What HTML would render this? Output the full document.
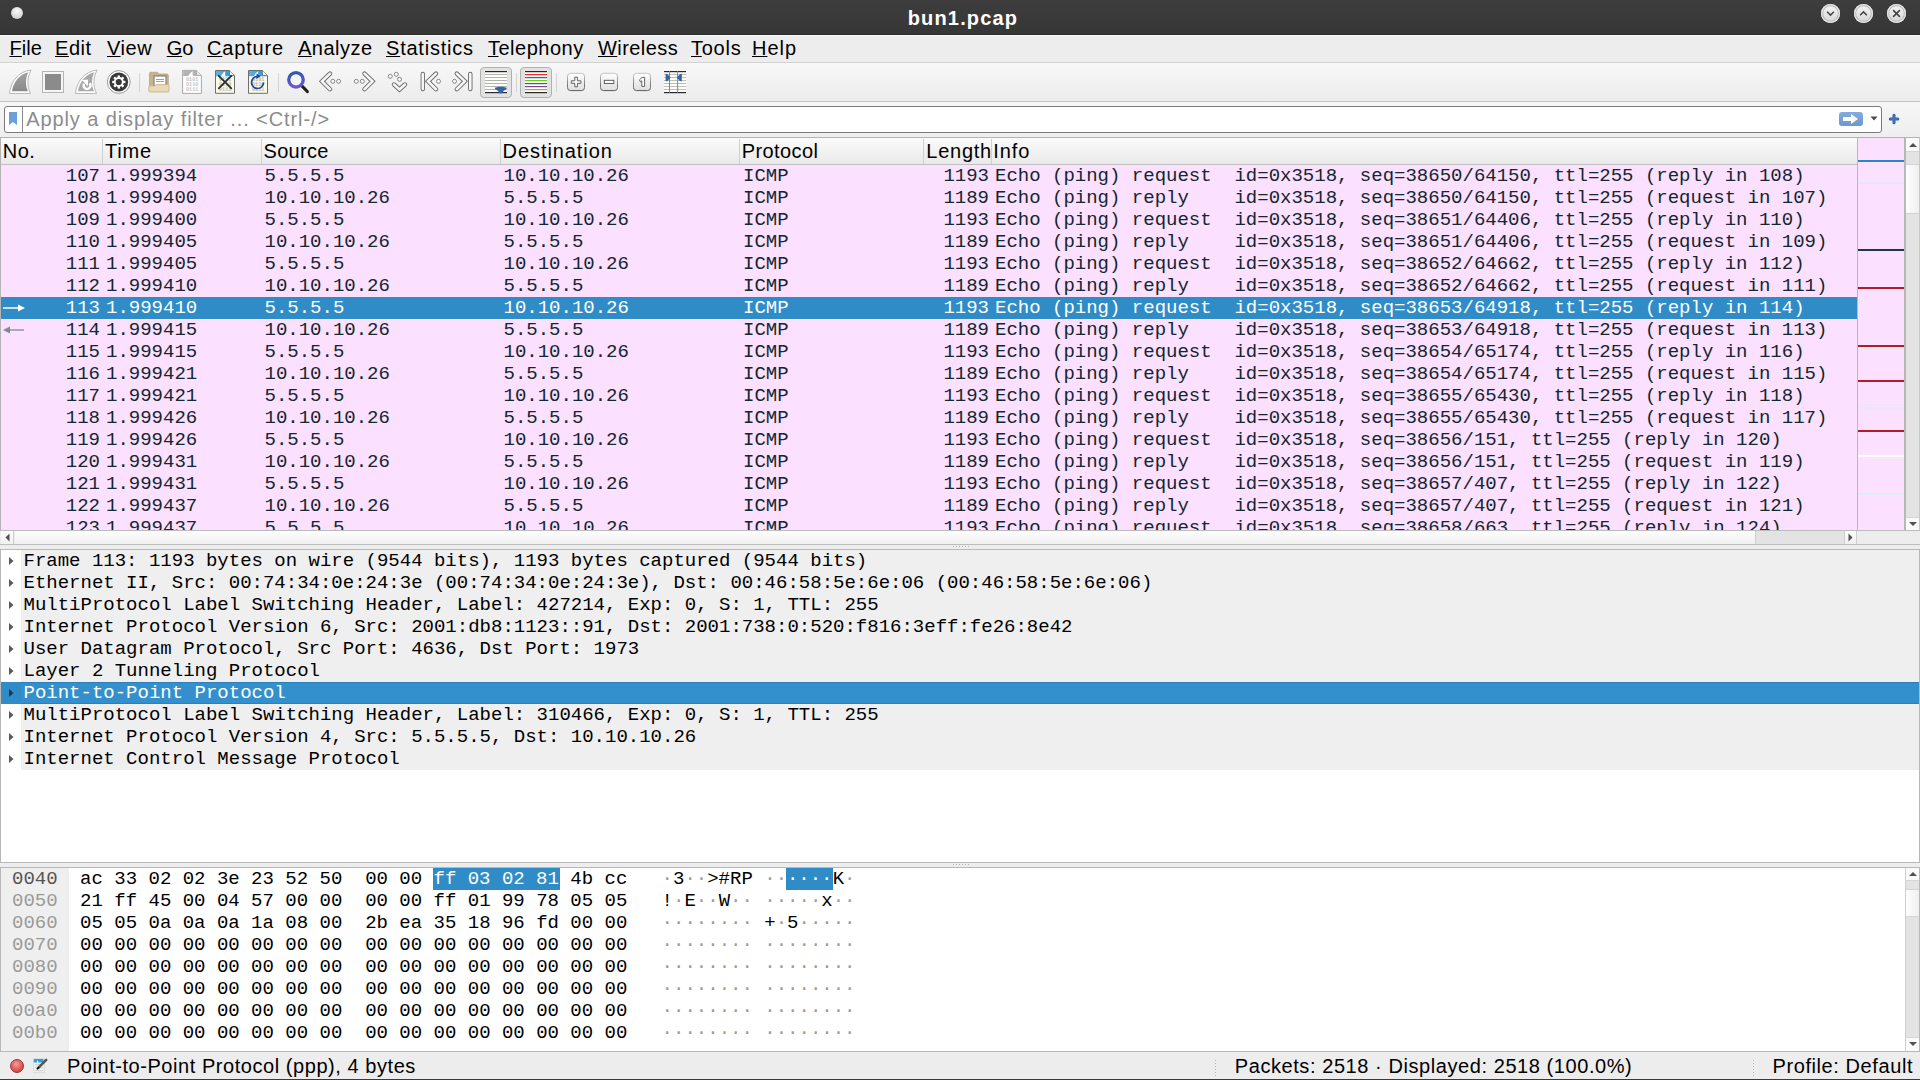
<!DOCTYPE html><html><head><meta charset="utf-8"><title>bun1.pcap</title><style>

*{box-sizing:border-box;margin:0;padding:0}
html,body{width:1920px;height:1080px;overflow:hidden;background:#ededed}
body{position:relative;font-family:"Liberation Sans",sans-serif;font-size:20px;color:#000}
.a{position:absolute}
.t{position:absolute;white-space:pre;line-height:22px}
.m{font-family:"Liberation Mono",monospace;font-size:19px}

</style></head><body>
<div class="a" style="left:0;top:0;width:1920px;height:35px;background:linear-gradient(#3d3d3d,#363636);border-bottom:1px solid #2b2b2b"></div>
<div class="a" style="left:0;top:35px;width:1920px;height:1px;background:#fafafa"></div>
<div class="a" style="left:11px;top:7px;width:12px;height:12px;border-radius:50%;background:radial-gradient(circle at 50% 35%,#fafafa,#d4d4d4 70%,#bdbdbd);box-shadow:0 0 1px #222"></div>
<div class="t" style="left:907.75px;top:7px;font-weight:bold;color:#ffffff;letter-spacing:1.156px">bun1.pcap</div>
<div class="a" style="left:1821.0px;top:4px;width:19px;height:19px;border-radius:50%;background:linear-gradient(#f6f6f6,#d6d6d6);box-shadow:inset 0 0 0 1.2px #e2e2e2,inset 0 0 0 2.2px #b8b8b8"></div>
<svg class="a" style="left:1821.0px;top:4px" width="19" height="19" viewBox="-9.5 -9.5 19 19"><path d="M-3.4,-1.7 L0,1.6 L3.4,-1.7" stroke="#444" stroke-width="1.5" fill="none"/></svg>
<div class="a" style="left:1854.0px;top:4px;width:19px;height:19px;border-radius:50%;background:linear-gradient(#f6f6f6,#d6d6d6);box-shadow:inset 0 0 0 1.2px #e2e2e2,inset 0 0 0 2.2px #b8b8b8"></div>
<svg class="a" style="left:1854.0px;top:4px" width="19" height="19" viewBox="-9.5 -9.5 19 19"><path d="M-3.4,1.7 L0,-1.6 L3.4,1.7" stroke="#444" stroke-width="1.5" fill="none"/></svg>
<div class="a" style="left:1887.0px;top:4px;width:19px;height:19px;border-radius:50%;background:linear-gradient(#f6f6f6,#d6d6d6);box-shadow:inset 0 0 0 1.2px #e2e2e2,inset 0 0 0 2.2px #b8b8b8"></div>
<svg class="a" style="left:1887.0px;top:4px" width="19" height="19" viewBox="-9.5 -9.5 19 19"><path d="M-3.4,-3.4 L3.4,3.4 M3.4,-3.4 L-3.4,3.4" stroke="#444" stroke-width="1.5" fill="none"/></svg>
<div class="a" style="left:0;top:36px;width:1920px;height:27px;background:#ededed;border-bottom:1px solid #d2d2d2"></div>
<div class="t" style="left:9.50px;top:37px;letter-spacing:0.067px"><span style="text-decoration:underline;text-decoration-thickness:1px;text-underline-offset:1px">F</span>ile</div>
<div class="t" style="left:55.00px;top:37px;letter-spacing:0.567px"><span style="text-decoration:underline;text-decoration-thickness:1px;text-underline-offset:1px">E</span>dit</div>
<div class="t" style="left:107.00px;top:37px;letter-spacing:0.567px"><span style="text-decoration:underline;text-decoration-thickness:1px;text-underline-offset:1px">V</span>iew</div>
<div class="t" style="left:166.70px;top:37px;letter-spacing:0.000px"><span style="text-decoration:underline;text-decoration-thickness:1px;text-underline-offset:1px">G</span>o</div>
<div class="t" style="left:207.00px;top:37px;letter-spacing:0.833px"><span style="text-decoration:underline;text-decoration-thickness:1px;text-underline-offset:1px">C</span>apture</div>
<div class="t" style="left:298.00px;top:37px;letter-spacing:0.500px"><span style="text-decoration:underline;text-decoration-thickness:1px;text-underline-offset:1px">A</span>nalyze</div>
<div class="t" style="left:386.00px;top:37px;letter-spacing:0.778px"><span style="text-decoration:underline;text-decoration-thickness:1px;text-underline-offset:1px">S</span>tatistics</div>
<div class="t" style="left:488.00px;top:37px;letter-spacing:0.500px"><span style="text-decoration:underline;text-decoration-thickness:1px;text-underline-offset:1px">T</span>elephony</div>
<div class="t" style="left:598.00px;top:37px;letter-spacing:0.429px"><span style="text-decoration:underline;text-decoration-thickness:1px;text-underline-offset:1px">W</span>ireless</div>
<div class="t" style="left:691.00px;top:37px;letter-spacing:0.750px"><span style="text-decoration:underline;text-decoration-thickness:1px;text-underline-offset:1px">T</span>ools</div>
<div class="t" style="left:752.00px;top:37px;letter-spacing:1.000px"><span style="text-decoration:underline;text-decoration-thickness:1px;text-underline-offset:1px">H</span>elp</div>
<div class="a" style="left:0;top:63px;width:1920px;height:39px;background:linear-gradient(#f8f8f8,#ececec);border-bottom:1px solid #c4c4c4"></div>
<svg class="a" style="left:0;top:62px" width="700" height="40" viewBox="0 62 700 40">
<defs>
<linearGradient id="gfin" x1="0" y1="0" x2="0" y2="1"><stop offset="0" stop-color="#a2a2a2"/><stop offset="1" stop-color="#8a8a8a"/></linearGradient>
<linearGradient id="gbtn" x1="0" y1="0" x2="0" y2="1"><stop offset="0" stop-color="#ffffff"/><stop offset="1" stop-color="#dedede"/></linearGradient>
<linearGradient id="gbord" x1="0" y1="0" x2="0" y2="1"><stop offset="0" stop-color="#c4c4c4"/><stop offset="1" stop-color="#5a5a5a"/></linearGradient>
<linearGradient id="gband" x1="0" y1="0" x2="1" y2="0"><stop offset="0" stop-color="#5ab4e8"/><stop offset="1" stop-color="#1898e0"/></linearGradient>
<linearGradient id="gring" x1="0" y1="0" x2="0" y2="1"><stop offset="0" stop-color="#2a5ab8"/><stop offset="1" stop-color="#6a58d0"/></linearGradient>
</defs>
<!-- 1 start capture fin -->
<path d="M9.5,93.5 C10.5,82 18,71.5 31,70 C27,78 27,86 30.5,93.5 Z" fill="#fff" stroke="#b8b8b8" stroke-width="1"/>
<path d="M12,91.3 C13.5,82 19.5,74.5 28.3,72.3 C25.3,79 25.3,85.5 28,91.3 Z" fill="url(#gfin)"/>
<!-- 2 stop -->
<rect x="42.5" y="71.5" width="21" height="21" fill="#f6f6f6" stroke="#b4b4b4" stroke-width="1"/>
<rect x="45" y="74" width="16" height="16" fill="#8b8b8b"/>
<!-- 3 restart fin -->
<path d="M75.5,93.5 C76.5,82 84,71.5 97,70 C93,78 93,86 96.5,93.5 Z" fill="#fff" stroke="#b8b8b8" stroke-width="1"/>
<path d="M78,91.3 C79.5,82 85.5,74.5 94.3,72.3 C91.3,79 91.3,85.5 94,91.3 Z" fill="#a9a9a9"/>
<path d="M84.1,83.8 A3.4,3.4 0 1 0 89.6,83.2" fill="none" stroke="#fff" stroke-width="2.3"/>
<path d="M82,79.9 L88.2,79.6 L87.7,86.2 Z" fill="#fff"/>
<!-- 4 options gear -->
<circle cx="118.8" cy="82" r="11.4" fill="#fff" stroke="#9a9a9a" stroke-width="1"/>
<circle cx="118.8" cy="82" r="9.4" fill="#3a3a3a"/>
<g transform="translate(118.8 82)">
<circle r="4.9" fill="#fff"/>
<g fill="#fff">
<rect x="-1.15" y="-6.6" width="2.3" height="2.6"/><rect x="-1.15" y="4" width="2.3" height="2.6"/>
<rect x="-6.6" y="-1.15" width="2.6" height="2.3"/><rect x="4" y="-1.15" width="2.6" height="2.3"/>
<rect x="-1.15" y="-6.6" width="2.3" height="2.6" transform="rotate(45)"/><rect x="-1.15" y="4" width="2.3" height="2.6" transform="rotate(45)"/>
<rect x="-6.6" y="-1.15" width="2.6" height="2.3" transform="rotate(45)"/><rect x="4" y="-1.15" width="2.6" height="2.3" transform="rotate(45)"/>
</g>
<circle r="3.1" fill="#383838"/>
</g>
<rect x="139" y="73" width="1" height="19" fill="#d4d4d4"/>
<!-- 5 open folder -->
<path d="M149.5,91 V73.5 Q149.5,72.3 150.7,72.3 H157.5 L158.8,74 H167 Q168.3,74 168.3,75.3 V86 Z" fill="#c9b38c" stroke="#b8a27c" stroke-width="0.8"/>
<rect x="154" y="76" width="12" height="9.5" fill="#fff" stroke="#6e746e" stroke-width="1"/>
<rect x="156" y="79" width="8" height="1" fill="#9aa09a"/><rect x="156" y="81" width="8" height="1" fill="#9aa09a"/>
<path d="M148.8,91 V86.8 Q148.8,85.8 149.8,85.8 H154.5 L156,84.6 H168 Q169,84.6 169,85.6 V91 Q169,92 168,92 H149.8 Q148.8,92 148.8,91 Z" fill="#ead8b8" stroke="#c8ae84" stroke-width="0.8"/>
<!-- 6 file (disabled) -->
<path d="M182.6,70.4 H196.5 L201.4,75.5 V93.4 H182.6 Z" fill="#fff" stroke="#a8a8a8" stroke-width="1"/>
<path d="M183.2,71 H196 L200,75 V76 H183.2 Z" fill="#b4b4b4"/>
<path d="M188.5,76 C189.5,73.5 191,72 193,71.3 C192.3,73 192.5,74.5 193,76 Z" fill="#fff"/>
<path d="M196.5,70.6 V75.5 H201.2" fill="#e8e8e8" stroke="#a8a8a8" stroke-width="0.8"/>
<g font-family="Liberation Mono" font-size="5.2" fill="#c4c4c4" font-weight="bold"><text x="186" y="81">0101</text><text x="186" y="86">0110</text><text x="186" y="91">0111</text></g>
<!-- 7 close file -->
<path d="M215.5,70.5 H229.5 L234.5,75.5 V93.3 H215.5 Z" fill="#fbfae8" stroke="#6e6e6e" stroke-width="1"/>
<path d="M216,71 H229.3 L233.5,75 V76.3 H216 Z" fill="url(#gband)"/>
<path d="M221,76.3 C222,73.5 223.5,72 225.5,71.3 C224.8,73 225,74.6 225.5,76.3 Z" fill="#fff"/>
<path d="M229.5,70.6 V75.5 H234.3" fill="#f4f4f4" stroke="#6e6e6e" stroke-width="0.8"/>
<g font-family="Liberation Mono" font-size="5.2" fill="#b8b8b0" font-weight="bold"><text x="219" y="81">0101</text><text x="219" y="86">0110</text><text x="219" y="91">0111</text></g>
<path d="M218.8,75.8 L231.3,88.3 M231.3,75.8 L218.8,88.3" stroke="#2a2e30" stroke-width="1.8" stroke-linecap="round"/>
<!-- 8 reload file -->
<path d="M248.5,70.5 H262.5 L267.5,75.5 V93.3 H248.5 Z" fill="#fbfae8" stroke="#6e6e6e" stroke-width="1"/>
<path d="M249,71 H262.3 L266.5,75 V76.3 H249 Z" fill="url(#gband)"/>
<path d="M254,76.3 C255,73.5 256.5,72 258.5,71.3 C257.8,73 258,74.6 258.5,76.3 Z" fill="#fff"/>
<path d="M262.5,70.6 V75.5 H267.3" fill="#f4f4f4" stroke="#6e6e6e" stroke-width="0.8"/>
<g font-family="Liberation Mono" font-size="5.2" fill="#b8b8b0" font-weight="bold"><text x="252" y="81">0101</text><text x="252" y="86">0110</text><text x="252" y="91">0111</text></g>
<path d="M263.5,82.5 A6,6 0 1 1 257.5,76.5" fill="none" stroke="#18489a" stroke-width="1.7"/>
<path d="M256.5,73.5 L260.5,76.3 L256.5,79 Z" fill="#18489a"/>
<rect x="278" y="73" width="1" height="19" fill="#d4d4d4"/>
<!-- 9 find -->
<path d="M301.5,85.5 L307.3,91.5" stroke="#1e1e1e" stroke-width="3.2" stroke-linecap="round"/>
<circle cx="296" cy="79.8" r="7.4" fill="#f4f4f4" stroke="url(#gring)" stroke-width="3"/>
<circle cx="296" cy="79.8" r="5.9" fill="none" stroke="#1e2a60" stroke-width="0.6" opacity="0.6"/>
<!-- nav chevrons -->
<g fill="none" stroke-linecap="round" stroke-linejoin="miter">
<g stroke="#6a6a6a" stroke-width="4.4">
<path d="M330,73.6 L322,81.3 L330,89.2"/>
<path d="M364.5,73.6 L372.5,81.3 L364.5,89.2"/>
<path d="M394,84.5 L399.5,89.5 L405,84.5"/>
<path d="M436,73.6 L428,81.3 L436,89.2"/><path d="M422.8,74 V89"/>
<path d="M456.8,73.6 L464.8,81.3 L456.8,89.2"/><path d="M470.3,74 V89"/>
</g>
<g stroke="#f6f6f6" stroke-width="2.6">
<path d="M330,73.6 L322,81.3 L330,89.2"/>
<path d="M364.5,73.6 L372.5,81.3 L364.5,89.2"/>
<path d="M394,84.5 L399.5,89.5 L405,84.5"/>
<path d="M436,73.6 L428,81.3 L436,89.2"/><path d="M422.8,74 V89"/>
<path d="M456.8,73.6 L464.8,81.3 L456.8,89.2"/><path d="M470.3,74 V89"/>
</g>
</g>
<g fill="#fafafa" stroke="#7a7a7a" stroke-width="0.9">
<circle cx="332.8" cy="81.3" r="2"/><circle cx="338.6" cy="81.3" r="2"/>
<circle cx="356.3" cy="81.3" r="2"/><circle cx="362.3" cy="81.3" r="2"/>
<circle cx="390.3" cy="76.3" r="2"/><circle cx="396.3" cy="74.3" r="2"/><circle cx="399.5" cy="79.3" r="2"/>
<circle cx="438.5" cy="81.3" r="2"/>
<circle cx="454.5" cy="81.3" r="2"/>
</g>
<!-- pressed autoscroll -->
<rect x="480.5" y="67.5" width="31" height="30" rx="3.5" fill="#e2e2e2" stroke="#b0b0b0" stroke-width="1"/>
<rect x="485" y="71" width="22" height="22" fill="#fdfdfd"/>
<g fill="#a8aca0"><rect x="485" y="74" width="22" height="0.9"/><rect x="485" y="77" width="22" height="0.9"/><rect x="485" y="80" width="22" height="0.9"/><rect x="485" y="83" width="22" height="0.9"/><rect x="485" y="86" width="22" height="0.9"/><rect x="485" y="89" width="22" height="0.9"/></g>
<rect x="485" y="71" width="22" height="1.2" fill="#262a2c"/><rect x="485" y="92" width="22" height="1.2" fill="#262a2c"/>
<path d="M494.8,87.8 Q500.8,85.6 506.8,87.8 Q507,89 503.5,91 L501.8,93.5 H499.8 L498.1,91 Q494.6,89 494.8,87.8 Z" fill="#3264aa"/>
<rect x="516" y="73" width="1" height="19" fill="#d4d4d4"/>
<!-- pressed colorize -->
<rect x="520.5" y="67.5" width="31" height="30" rx="3.5" fill="#e2e2e2" stroke="#b0b0b0" stroke-width="1"/>
<rect x="525" y="71" width="22" height="22" fill="#fdfdfd"/>
<rect x="525" y="71" width="22" height="1.2" fill="#262a2c"/>
<rect x="525" y="74" width="22" height="1.2" fill="#ee2828"/>
<rect x="525" y="77" width="22" height="1.2" fill="#3264aa"/>
<rect x="525" y="80" width="22" height="1.2" fill="#66d414"/>
<rect x="525" y="83" width="22" height="1.2" fill="#3264aa"/>
<rect x="525" y="86" width="22" height="1.2" fill="#74468a"/>
<rect x="525" y="89" width="22" height="1.2" fill="#c8a008"/>
<rect x="525" y="92" width="22" height="1.2" fill="#262a2c"/>
<rect x="556" y="73" width="1" height="19" fill="#d4d4d4"/>
<!-- zoom buttons -->
<rect x="567.5" y="73.3" width="17" height="17.3" rx="3" fill="url(#gbtn)" stroke="url(#gbord)" stroke-width="1"/>
<path d="M574.8,77.2 H577.4 V80.8 H580.9 V83.3 H577.4 V86.8 H574.8 V83.3 H571.3 V80.8 H574.8 Z" fill="#fff" stroke="#505450" stroke-width="0.9"/>
<rect x="600.5" y="73.3" width="17" height="17.3" rx="3" fill="url(#gbtn)" stroke="url(#gbord)" stroke-width="1"/>
<rect x="604.3" y="80.3" width="9.5" height="3.2" fill="#fff" stroke="#505450" stroke-width="0.9"/>
<rect x="633.5" y="73.3" width="17" height="17.3" rx="3" fill="url(#gbtn)" stroke="url(#gbord)" stroke-width="1"/>
<path d="M639.5,79.8 L642,77.4 H644.6 V86.4 H641.8 V80.8 L640.5,82 Z" fill="#fff" stroke="#505450" stroke-width="0.9"/>
<!-- resize columns -->
<rect x="664" y="71" width="22" height="22" fill="#fdfdfd"/>
<g fill="#b4b8ae"><rect x="664" y="74" width="22" height="0.9"/><rect x="664" y="77" width="22" height="0.9"/><rect x="664" y="80" width="22" height="0.9"/><rect x="664" y="83" width="22" height="0.9"/><rect x="664" y="86" width="22" height="0.9"/><rect x="664" y="89" width="22" height="0.9"/></g>
<rect x="664" y="71" width="22" height="1.2" fill="#262a2c"/><rect x="664" y="92" width="22" height="1.2" fill="#262a2c"/>
<rect x="669" y="71" width="0.9" height="22" fill="#7a7e78"/><rect x="677.2" y="71" width="0.9" height="22" fill="#7a7e78"/>
<path d="M665.6,73.8 Q666.5,73.6 667.5,74.2 L670.6,77.6 L667.5,81 Q666.5,81.5 665.6,81.3 Z" fill="#3264aa"/>
<path d="M681.8,73.8 Q680.9,73.6 679.9,74.2 L676.8,77.6 L679.9,81 Q680.9,81.5 681.8,81.3 Z" fill="#3264aa"/>
</svg>

<div class="a" style="left:0;top:102px;width:1920px;height:35px;background:linear-gradient(#f6f6f6,#eeeeee)"></div>
<div class="a" style="left:4px;top:106px;width:1878px;height:27px;background:#fff;border:1px solid #7a7a7a;border-radius:3px"></div>
<div class="a" style="left:22px;top:107px;width:1px;height:25px;background:#8a8a8a"></div>
<svg class="a" style="left:8px;top:111px" width="11" height="17" viewBox="0 0 11 17"><path d="M1,1 H9 V14 L5,11 L1,14 Z" fill="#6a9fd8"/></svg>
<div class="t" style="left:26.25px;top:108px;color:#8c8c8c;letter-spacing:0.897px">Apply a display filter ... &lt;Ctrl-/&gt;</div>
<div class="a" style="left:1839px;top:112px;width:24px;height:14px;border-radius:3px;background:linear-gradient(#86acdb,#6a98d0)"></div>
<svg class="a" style="left:1839px;top:112px" width="24" height="14" viewBox="0 0 24 14"><path d="M4,5 H12 V2 L19,7 L12,12 V9 H4 Z" fill="#fff"/></svg>
<svg class="a" style="left:1870px;top:116px" width="8" height="5" viewBox="0 0 8 5"><path d="M0.5,0.5 H7.5 L4,4.5 Z" fill="#4a4a4a"/></svg>
<svg class="a" style="left:1888px;top:113px" width="12" height="12" viewBox="0 0 12 12"><path d="M6,2.3 V9.8 M2.3,6 H9.8" stroke="#2f5ea6" stroke-width="3" stroke-linecap="round"/><path d="M6,2.6 V9.5 M2.6,6 H9.5" stroke="#4f80c8" stroke-width="1" stroke-linecap="round"/></svg>
<div class="a" style="left:0;top:137px;width:1920px;height:394px;background:#fce0ff;border-top:1px solid #b4b4b4;border-left:1px solid #b4b4b4;border-right:1px solid #c8c8c8"></div>
<div class="a" style="left:1px;top:138px;width:1856px;height:27px;background:linear-gradient(#fbfbfb,#e9e9e9);border-bottom:1px solid #c0c0c0"></div>
<div class="a" style="left:102px;top:139px;width:1px;height:25px;background:#d0d0d0"></div>
<div class="a" style="left:261px;top:139px;width:1px;height:25px;background:#d0d0d0"></div>
<div class="a" style="left:500px;top:139px;width:1px;height:25px;background:#d0d0d0"></div>
<div class="a" style="left:739px;top:139px;width:1px;height:25px;background:#d0d0d0"></div>
<div class="a" style="left:923px;top:139px;width:1px;height:25px;background:#d0d0d0"></div>
<div class="a" style="left:991px;top:139px;width:1px;height:25px;background:#d0d0d0"></div>
<div class="t" style="left:2.75px;top:140px;letter-spacing:0.500px">No.</div>
<div class="t" style="left:105.10px;top:140px;letter-spacing:0.767px">Time</div>
<div class="t" style="left:263.50px;top:140px;letter-spacing:0.300px">Source</div>
<div class="t" style="left:502.60px;top:140px;letter-spacing:0.920px">Destination</div>
<div class="t" style="left:741.80px;top:140px;letter-spacing:0.386px">Protocol</div>
<div class="t" style="left:926.30px;top:140px;letter-spacing:0.740px">Length</div>
<div class="t" style="left:993.30px;top:140px;letter-spacing:0.900px">Info</div>
<div class="a" style="left:1px;top:165px;width:1856px;height:22px;background:transparent;overflow:hidden;color:#12272e">
<div class="t m" style="left:64.8px;top:0">107</div>
<div class="t m" style="left:105px;top:0">1.999394</div>
<div class="t m" style="left:263.5px;top:0">5.5.5.5</div>
<div class="t m" style="left:502.5px;top:0">10.10.10.26</div>
<div class="t m" style="left:742px;top:0">ICMP</div>
<div class="t m" style="left:942.4px;top:0">1193</div>
<div class="t m" style="left:994px;top:0">Echo (ping) request  id=0x3518, seq=38650/64150, ttl=255 (reply in 108)</div>
</div>
<div class="a" style="left:1px;top:187px;width:1856px;height:22px;background:transparent;overflow:hidden;color:#12272e">
<div class="t m" style="left:64.8px;top:0">108</div>
<div class="t m" style="left:105px;top:0">1.999400</div>
<div class="t m" style="left:263.5px;top:0">10.10.10.26</div>
<div class="t m" style="left:502.5px;top:0">5.5.5.5</div>
<div class="t m" style="left:742px;top:0">ICMP</div>
<div class="t m" style="left:942.4px;top:0">1189</div>
<div class="t m" style="left:994px;top:0">Echo (ping) reply    id=0x3518, seq=38650/64150, ttl=255 (request in 107)</div>
</div>
<div class="a" style="left:1px;top:209px;width:1856px;height:22px;background:transparent;overflow:hidden;color:#12272e">
<div class="t m" style="left:64.8px;top:0">109</div>
<div class="t m" style="left:105px;top:0">1.999400</div>
<div class="t m" style="left:263.5px;top:0">5.5.5.5</div>
<div class="t m" style="left:502.5px;top:0">10.10.10.26</div>
<div class="t m" style="left:742px;top:0">ICMP</div>
<div class="t m" style="left:942.4px;top:0">1193</div>
<div class="t m" style="left:994px;top:0">Echo (ping) request  id=0x3518, seq=38651/64406, ttl=255 (reply in 110)</div>
</div>
<div class="a" style="left:1px;top:231px;width:1856px;height:22px;background:transparent;overflow:hidden;color:#12272e">
<div class="t m" style="left:64.8px;top:0">110</div>
<div class="t m" style="left:105px;top:0">1.999405</div>
<div class="t m" style="left:263.5px;top:0">10.10.10.26</div>
<div class="t m" style="left:502.5px;top:0">5.5.5.5</div>
<div class="t m" style="left:742px;top:0">ICMP</div>
<div class="t m" style="left:942.4px;top:0">1189</div>
<div class="t m" style="left:994px;top:0">Echo (ping) reply    id=0x3518, seq=38651/64406, ttl=255 (request in 109)</div>
</div>
<div class="a" style="left:1px;top:253px;width:1856px;height:22px;background:transparent;overflow:hidden;color:#12272e">
<div class="t m" style="left:64.8px;top:0">111</div>
<div class="t m" style="left:105px;top:0">1.999405</div>
<div class="t m" style="left:263.5px;top:0">5.5.5.5</div>
<div class="t m" style="left:502.5px;top:0">10.10.10.26</div>
<div class="t m" style="left:742px;top:0">ICMP</div>
<div class="t m" style="left:942.4px;top:0">1193</div>
<div class="t m" style="left:994px;top:0">Echo (ping) request  id=0x3518, seq=38652/64662, ttl=255 (reply in 112)</div>
</div>
<div class="a" style="left:1px;top:275px;width:1856px;height:22px;background:transparent;overflow:hidden;color:#12272e">
<div class="t m" style="left:64.8px;top:0">112</div>
<div class="t m" style="left:105px;top:0">1.999410</div>
<div class="t m" style="left:263.5px;top:0">10.10.10.26</div>
<div class="t m" style="left:502.5px;top:0">5.5.5.5</div>
<div class="t m" style="left:742px;top:0">ICMP</div>
<div class="t m" style="left:942.4px;top:0">1189</div>
<div class="t m" style="left:994px;top:0">Echo (ping) reply    id=0x3518, seq=38652/64662, ttl=255 (request in 111)</div>
</div>
<div class="a" style="left:1px;top:297px;width:1856px;height:22px;background:#308cc6;overflow:hidden;color:#ffffff">
<div class="t m" style="left:64.8px;top:0">113</div>
<div class="t m" style="left:105px;top:0">1.999410</div>
<div class="t m" style="left:263.5px;top:0">5.5.5.5</div>
<div class="t m" style="left:502.5px;top:0">10.10.10.26</div>
<div class="t m" style="left:742px;top:0">ICMP</div>
<div class="t m" style="left:942.4px;top:0">1193</div>
<div class="t m" style="left:994px;top:0">Echo (ping) request  id=0x3518, seq=38653/64918, ttl=255 (reply in 114)</div>
</div>
<div class="a" style="left:1px;top:319px;width:1856px;height:22px;background:transparent;overflow:hidden;color:#12272e">
<div class="t m" style="left:64.8px;top:0">114</div>
<div class="t m" style="left:105px;top:0">1.999415</div>
<div class="t m" style="left:263.5px;top:0">10.10.10.26</div>
<div class="t m" style="left:502.5px;top:0">5.5.5.5</div>
<div class="t m" style="left:742px;top:0">ICMP</div>
<div class="t m" style="left:942.4px;top:0">1189</div>
<div class="t m" style="left:994px;top:0">Echo (ping) reply    id=0x3518, seq=38653/64918, ttl=255 (request in 113)</div>
</div>
<div class="a" style="left:1px;top:341px;width:1856px;height:22px;background:transparent;overflow:hidden;color:#12272e">
<div class="t m" style="left:64.8px;top:0">115</div>
<div class="t m" style="left:105px;top:0">1.999415</div>
<div class="t m" style="left:263.5px;top:0">5.5.5.5</div>
<div class="t m" style="left:502.5px;top:0">10.10.10.26</div>
<div class="t m" style="left:742px;top:0">ICMP</div>
<div class="t m" style="left:942.4px;top:0">1193</div>
<div class="t m" style="left:994px;top:0">Echo (ping) request  id=0x3518, seq=38654/65174, ttl=255 (reply in 116)</div>
</div>
<div class="a" style="left:1px;top:363px;width:1856px;height:22px;background:transparent;overflow:hidden;color:#12272e">
<div class="t m" style="left:64.8px;top:0">116</div>
<div class="t m" style="left:105px;top:0">1.999421</div>
<div class="t m" style="left:263.5px;top:0">10.10.10.26</div>
<div class="t m" style="left:502.5px;top:0">5.5.5.5</div>
<div class="t m" style="left:742px;top:0">ICMP</div>
<div class="t m" style="left:942.4px;top:0">1189</div>
<div class="t m" style="left:994px;top:0">Echo (ping) reply    id=0x3518, seq=38654/65174, ttl=255 (request in 115)</div>
</div>
<div class="a" style="left:1px;top:385px;width:1856px;height:22px;background:transparent;overflow:hidden;color:#12272e">
<div class="t m" style="left:64.8px;top:0">117</div>
<div class="t m" style="left:105px;top:0">1.999421</div>
<div class="t m" style="left:263.5px;top:0">5.5.5.5</div>
<div class="t m" style="left:502.5px;top:0">10.10.10.26</div>
<div class="t m" style="left:742px;top:0">ICMP</div>
<div class="t m" style="left:942.4px;top:0">1193</div>
<div class="t m" style="left:994px;top:0">Echo (ping) request  id=0x3518, seq=38655/65430, ttl=255 (reply in 118)</div>
</div>
<div class="a" style="left:1px;top:407px;width:1856px;height:22px;background:transparent;overflow:hidden;color:#12272e">
<div class="t m" style="left:64.8px;top:0">118</div>
<div class="t m" style="left:105px;top:0">1.999426</div>
<div class="t m" style="left:263.5px;top:0">10.10.10.26</div>
<div class="t m" style="left:502.5px;top:0">5.5.5.5</div>
<div class="t m" style="left:742px;top:0">ICMP</div>
<div class="t m" style="left:942.4px;top:0">1189</div>
<div class="t m" style="left:994px;top:0">Echo (ping) reply    id=0x3518, seq=38655/65430, ttl=255 (request in 117)</div>
</div>
<div class="a" style="left:1px;top:429px;width:1856px;height:22px;background:transparent;overflow:hidden;color:#12272e">
<div class="t m" style="left:64.8px;top:0">119</div>
<div class="t m" style="left:105px;top:0">1.999426</div>
<div class="t m" style="left:263.5px;top:0">5.5.5.5</div>
<div class="t m" style="left:502.5px;top:0">10.10.10.26</div>
<div class="t m" style="left:742px;top:0">ICMP</div>
<div class="t m" style="left:942.4px;top:0">1193</div>
<div class="t m" style="left:994px;top:0">Echo (ping) request  id=0x3518, seq=38656/151, ttl=255 (reply in 120)</div>
</div>
<div class="a" style="left:1px;top:451px;width:1856px;height:22px;background:transparent;overflow:hidden;color:#12272e">
<div class="t m" style="left:64.8px;top:0">120</div>
<div class="t m" style="left:105px;top:0">1.999431</div>
<div class="t m" style="left:263.5px;top:0">10.10.10.26</div>
<div class="t m" style="left:502.5px;top:0">5.5.5.5</div>
<div class="t m" style="left:742px;top:0">ICMP</div>
<div class="t m" style="left:942.4px;top:0">1189</div>
<div class="t m" style="left:994px;top:0">Echo (ping) reply    id=0x3518, seq=38656/151, ttl=255 (request in 119)</div>
</div>
<div class="a" style="left:1px;top:473px;width:1856px;height:22px;background:transparent;overflow:hidden;color:#12272e">
<div class="t m" style="left:64.8px;top:0">121</div>
<div class="t m" style="left:105px;top:0">1.999431</div>
<div class="t m" style="left:263.5px;top:0">5.5.5.5</div>
<div class="t m" style="left:502.5px;top:0">10.10.10.26</div>
<div class="t m" style="left:742px;top:0">ICMP</div>
<div class="t m" style="left:942.4px;top:0">1193</div>
<div class="t m" style="left:994px;top:0">Echo (ping) request  id=0x3518, seq=38657/407, ttl=255 (reply in 122)</div>
</div>
<div class="a" style="left:1px;top:495px;width:1856px;height:22px;background:transparent;overflow:hidden;color:#12272e">
<div class="t m" style="left:64.8px;top:0">122</div>
<div class="t m" style="left:105px;top:0">1.999437</div>
<div class="t m" style="left:263.5px;top:0">10.10.10.26</div>
<div class="t m" style="left:502.5px;top:0">5.5.5.5</div>
<div class="t m" style="left:742px;top:0">ICMP</div>
<div class="t m" style="left:942.4px;top:0">1189</div>
<div class="t m" style="left:994px;top:0">Echo (ping) reply    id=0x3518, seq=38657/407, ttl=255 (request in 121)</div>
</div>
<div class="a" style="left:1px;top:517px;width:1856px;height:13px;background:transparent;overflow:hidden;color:#12272e">
<div class="t m" style="left:64.8px;top:0">123</div>
<div class="t m" style="left:105px;top:0">1.999437</div>
<div class="t m" style="left:263.5px;top:0">5.5.5.5</div>
<div class="t m" style="left:502.5px;top:0">10.10.10.26</div>
<div class="t m" style="left:742px;top:0">ICMP</div>
<div class="t m" style="left:942.4px;top:0">1193</div>
<div class="t m" style="left:994px;top:0">Echo (ping) request  id=0x3518, seq=38658/663, ttl=255 (reply in 124)</div>
</div>
<svg class="a" style="left:1px;top:297px" width="26" height="44" viewBox="0 0 26 44"><path d="M2,11 H19" stroke="#fff" stroke-width="1.5"/><path d="M17,7.5 L24,11 L17,14.5 Z" fill="#fff"/><path d="M8,33 H23" stroke="#7f8c8d" stroke-width="1.3"/><path d="M9,29.5 L2,33 L9,36.5 Z" fill="#7f8c8d"/></svg>
<div class="a" style="left:1857px;top:138px;width:1px;height:392px;background:#b8b8b8"></div>
<div class="a" style="left:1858px;top:138px;width:46px;height:392px;background:#fce0ff"></div>
<div class="a" style="left:1904px;top:138px;width:2px;height:392px;background:#b8b8b8"></div>
<div class="a" style="left:1858px;top:160px;width:46px;height:2px;background:#2a86c8"></div>
<div class="a" style="left:1858px;top:182px;width:46px;height:2px;background:#e2e6f6"></div>
<div class="a" style="left:1858px;top:249px;width:46px;height:1.5px;background:#1e3450"></div>
<div class="a" style="left:1858px;top:287px;width:46px;height:2px;background:#b01c28"></div>
<div class="a" style="left:1858px;top:345px;width:46px;height:2px;background:#b01c28"></div>
<div class="a" style="left:1858px;top:348px;width:46px;height:3px;background:#ece6f8"></div>
<div class="a" style="left:1858px;top:363px;width:46px;height:1px;background:#eee8fa"></div>
<div class="a" style="left:1858px;top:380px;width:46px;height:2px;background:#b01c28"></div>
<div class="a" style="left:1858px;top:404px;width:46px;height:1.5px;background:#ebe6f8"></div>
<div class="a" style="left:1858px;top:407px;width:46px;height:1.5px;background:#ebe6f8"></div>
<div class="a" style="left:1858px;top:430px;width:46px;height:2px;background:#b01c28"></div>
<div class="a" style="left:1858px;top:455px;width:46px;height:2px;background:#ffffff"></div>
<div class="a" style="left:1858px;top:493px;width:46px;height:2px;background:#e0ecf8"></div>
<div class="a" style="left:1906px;top:138px;width:13px;height:392px;background:#e3e3e3"></div>
<div class="a" style="left:1906px;top:138px;width:13px;height:14px;background:#fafafa;border-bottom:1px solid #d6d6d6"></div>
<svg class="a" style="left:1906px;top:138px" width="14" height="14" viewBox="0 0 14 14"><path d="M3,9 L7,5 L11,9 Z" fill="#505050"/></svg>
<div class="a" style="left:1906px;top:164px;width:13px;height:50px;background:linear-gradient(90deg,#fdfdfd,#f0f0f0);border-top:1px solid #d4d4d4;border-bottom:1px solid #d4d4d4"></div>
<div class="a" style="left:1906px;top:517px;width:13px;height:13px;background:#fafafa;border-top:1px solid #d6d6d6"></div>
<svg class="a" style="left:1906px;top:517px" width="14" height="13" viewBox="0 0 14 13"><path d="M3,5 L7,9 L11,5 Z" fill="#505050"/></svg>
<div class="a" style="left:0;top:530px;width:1920px;height:15px;background:#ededed;border-top:1px solid #bcbcbc;border-bottom:1px solid #bcbcbc"></div>
<div class="a" style="left:1px;top:531px;width:13px;height:13px;background:linear-gradient(#fdfdfd,#f0f0f0);border-right:1px solid #cfcfcf"></div>
<svg class="a" style="left:1px;top:531px" width="13" height="13" viewBox="0 0 13 13"><path d="M8.5,2.5 L4.5,6.5 L8.5,10.5 Z" fill="#505050"/></svg>
<div class="a" style="left:15px;top:531px;width:1741px;height:13px;background:linear-gradient(#fdfdfd,#f0f0f0);border-right:1px solid #cfcfcf"></div>
<div class="a" style="left:1756px;top:531px;width:88px;height:13px;background:#e3e3e3"></div>
<div class="a" style="left:1844px;top:531px;width:13px;height:13px;background:linear-gradient(#fdfdfd,#f0f0f0);border-left:1px solid #cfcfcf;border-right:1px solid #cfcfcf"></div>
<svg class="a" style="left:1844px;top:531px" width="13" height="13" viewBox="0 0 13 13"><path d="M4.5,2.5 L8.5,6.5 L4.5,10.5 Z" fill="#505050"/></svg>
<div class="a" style="left:953px;top:546px;width:18px;height:1px;background:repeating-linear-gradient(90deg,#b0b0b0 0 1px,transparent 1px 3px)"></div>
<div class="a" style="left:0;top:549px;width:1920px;height:314px;background:#fff;border:1px solid #b8b8b8"></div>
<div class="a" style="left:21px;top:550px;width:1898px;height:22px;background:#efefef"></div>
<svg class="a" style="left:6px;top:550px" width="12" height="22" viewBox="0 0 12 22"><path d="M3,7 L7.5,11 L3,15 Z" fill="#5a5a5a"/></svg>
<div class="t m" style="left:23.5px;top:550px;color:#000">Frame 113: 1193 bytes on wire (9544 bits), 1193 bytes captured (9544 bits)</div>
<div class="a" style="left:21px;top:572px;width:1898px;height:22px;background:#efefef"></div>
<svg class="a" style="left:6px;top:572px" width="12" height="22" viewBox="0 0 12 22"><path d="M3,7 L7.5,11 L3,15 Z" fill="#5a5a5a"/></svg>
<div class="t m" style="left:23.5px;top:572px;color:#000">Ethernet II, Src: 00:74:34:0e:24:3e (00:74:34:0e:24:3e), Dst: 00:46:58:5e:6e:06 (00:46:58:5e:6e:06)</div>
<div class="a" style="left:21px;top:594px;width:1898px;height:22px;background:#efefef"></div>
<svg class="a" style="left:6px;top:594px" width="12" height="22" viewBox="0 0 12 22"><path d="M3,7 L7.5,11 L3,15 Z" fill="#5a5a5a"/></svg>
<div class="t m" style="left:23.5px;top:594px;color:#000">MultiProtocol Label Switching Header, Label: 427214, Exp: 0, S: 1, TTL: 255</div>
<div class="a" style="left:21px;top:616px;width:1898px;height:22px;background:#efefef"></div>
<svg class="a" style="left:6px;top:616px" width="12" height="22" viewBox="0 0 12 22"><path d="M3,7 L7.5,11 L3,15 Z" fill="#5a5a5a"/></svg>
<div class="t m" style="left:23.5px;top:616px;color:#000">Internet Protocol Version 6, Src: 2001:db8:1123::91, Dst: 2001:738:0:520:f816:3eff:fe26:8e42</div>
<div class="a" style="left:21px;top:638px;width:1898px;height:22px;background:#efefef"></div>
<svg class="a" style="left:6px;top:638px" width="12" height="22" viewBox="0 0 12 22"><path d="M3,7 L7.5,11 L3,15 Z" fill="#5a5a5a"/></svg>
<div class="t m" style="left:23.5px;top:638px;color:#000">User Datagram Protocol, Src Port: 4636, Dst Port: 1973</div>
<div class="a" style="left:21px;top:660px;width:1898px;height:22px;background:#efefef"></div>
<svg class="a" style="left:6px;top:660px" width="12" height="22" viewBox="0 0 12 22"><path d="M3,7 L7.5,11 L3,15 Z" fill="#5a5a5a"/></svg>
<div class="t m" style="left:23.5px;top:660px;color:#000">Layer 2 Tunneling Protocol</div>
<div class="a" style="left:1px;top:682px;width:1918px;height:22px;background:#308cc6"></div>
<div class="a" style="left:21px;top:682px;width:1898px;height:22px;background:#3490cc;border-top:1px solid #2a80bb;border-bottom:1px solid #2a80bb"></div>
<svg class="a" style="left:6px;top:682px" width="12" height="22" viewBox="0 0 12 22"><path d="M3,7 L7.5,11 L3,15 Z" fill="#1d3850"/></svg>
<div class="t m" style="left:23.5px;top:682px;color:#fff">Point-to-Point Protocol</div>
<div class="a" style="left:21px;top:704px;width:1898px;height:22px;background:#efefef"></div>
<svg class="a" style="left:6px;top:704px" width="12" height="22" viewBox="0 0 12 22"><path d="M3,7 L7.5,11 L3,15 Z" fill="#5a5a5a"/></svg>
<div class="t m" style="left:23.5px;top:704px;color:#000">MultiProtocol Label Switching Header, Label: 310466, Exp: 0, S: 1, TTL: 255</div>
<div class="a" style="left:21px;top:726px;width:1898px;height:22px;background:#efefef"></div>
<svg class="a" style="left:6px;top:726px" width="12" height="22" viewBox="0 0 12 22"><path d="M3,7 L7.5,11 L3,15 Z" fill="#5a5a5a"/></svg>
<div class="t m" style="left:23.5px;top:726px;color:#000">Internet Protocol Version 4, Src: 5.5.5.5, Dst: 10.10.10.26</div>
<div class="a" style="left:21px;top:748px;width:1898px;height:22px;background:#efefef"></div>
<svg class="a" style="left:6px;top:748px" width="12" height="22" viewBox="0 0 12 22"><path d="M3,7 L7.5,11 L3,15 Z" fill="#5a5a5a"/></svg>
<div class="t m" style="left:23.5px;top:748px;color:#000">Internet Control Message Protocol</div>
<div class="a" style="left:0;top:867px;width:1920px;height:185px;background:#fff;border:1px solid #b8b8b8"></div>
<div class="a" style="left:1px;top:868px;width:68px;height:183px;background:#efefef"></div>
<div class="t m" style="left:12px;top:868px;color:#555555">0040</div>
<div class="t m" style="left:80.10000000000001px;top:868px;color:#000">ac 33 02 02 3e 23 52 50  00 00 ff 03 02 81 4b cc   <span style="color:#9c9c9c">·</span>3<span style="color:#9c9c9c">·</span><span style="color:#9c9c9c">·</span>&gt;#RP <span style="color:#9c9c9c">·</span><span style="color:#9c9c9c">·</span><span style="color:#9c9c9c">·</span><span style="color:#9c9c9c">·</span><span style="color:#9c9c9c">·</span><span style="color:#9c9c9c">·</span>K<span style="color:#9c9c9c">·</span></div>
<div class="t m" style="left:12px;top:890px;color:#9a9a9a">0050</div>
<div class="t m" style="left:80.10000000000001px;top:890px;color:#000">21 ff 45 00 04 57 00 00  00 00 ff 01 99 78 05 05   !<span style="color:#9c9c9c">·</span>E<span style="color:#9c9c9c">·</span><span style="color:#9c9c9c">·</span>W<span style="color:#9c9c9c">·</span><span style="color:#9c9c9c">·</span> <span style="color:#9c9c9c">·</span><span style="color:#9c9c9c">·</span><span style="color:#9c9c9c">·</span><span style="color:#9c9c9c">·</span><span style="color:#9c9c9c">·</span>x<span style="color:#9c9c9c">·</span><span style="color:#9c9c9c">·</span></div>
<div class="t m" style="left:12px;top:912px;color:#9a9a9a">0060</div>
<div class="t m" style="left:80.10000000000001px;top:912px;color:#000">05 05 0a 0a 0a 1a 08 00  2b ea 35 18 96 fd 00 00   <span style="color:#9c9c9c">·</span><span style="color:#9c9c9c">·</span><span style="color:#9c9c9c">·</span><span style="color:#9c9c9c">·</span><span style="color:#9c9c9c">·</span><span style="color:#9c9c9c">·</span><span style="color:#9c9c9c">·</span><span style="color:#9c9c9c">·</span> +<span style="color:#9c9c9c">·</span>5<span style="color:#9c9c9c">·</span><span style="color:#9c9c9c">·</span><span style="color:#9c9c9c">·</span><span style="color:#9c9c9c">·</span><span style="color:#9c9c9c">·</span></div>
<div class="t m" style="left:12px;top:934px;color:#9a9a9a">0070</div>
<div class="t m" style="left:80.10000000000001px;top:934px;color:#000">00 00 00 00 00 00 00 00  00 00 00 00 00 00 00 00   <span style="color:#9c9c9c">·</span><span style="color:#9c9c9c">·</span><span style="color:#9c9c9c">·</span><span style="color:#9c9c9c">·</span><span style="color:#9c9c9c">·</span><span style="color:#9c9c9c">·</span><span style="color:#9c9c9c">·</span><span style="color:#9c9c9c">·</span> <span style="color:#9c9c9c">·</span><span style="color:#9c9c9c">·</span><span style="color:#9c9c9c">·</span><span style="color:#9c9c9c">·</span><span style="color:#9c9c9c">·</span><span style="color:#9c9c9c">·</span><span style="color:#9c9c9c">·</span><span style="color:#9c9c9c">·</span></div>
<div class="t m" style="left:12px;top:956px;color:#9a9a9a">0080</div>
<div class="t m" style="left:80.10000000000001px;top:956px;color:#000">00 00 00 00 00 00 00 00  00 00 00 00 00 00 00 00   <span style="color:#9c9c9c">·</span><span style="color:#9c9c9c">·</span><span style="color:#9c9c9c">·</span><span style="color:#9c9c9c">·</span><span style="color:#9c9c9c">·</span><span style="color:#9c9c9c">·</span><span style="color:#9c9c9c">·</span><span style="color:#9c9c9c">·</span> <span style="color:#9c9c9c">·</span><span style="color:#9c9c9c">·</span><span style="color:#9c9c9c">·</span><span style="color:#9c9c9c">·</span><span style="color:#9c9c9c">·</span><span style="color:#9c9c9c">·</span><span style="color:#9c9c9c">·</span><span style="color:#9c9c9c">·</span></div>
<div class="t m" style="left:12px;top:978px;color:#9a9a9a">0090</div>
<div class="t m" style="left:80.10000000000001px;top:978px;color:#000">00 00 00 00 00 00 00 00  00 00 00 00 00 00 00 00   <span style="color:#9c9c9c">·</span><span style="color:#9c9c9c">·</span><span style="color:#9c9c9c">·</span><span style="color:#9c9c9c">·</span><span style="color:#9c9c9c">·</span><span style="color:#9c9c9c">·</span><span style="color:#9c9c9c">·</span><span style="color:#9c9c9c">·</span> <span style="color:#9c9c9c">·</span><span style="color:#9c9c9c">·</span><span style="color:#9c9c9c">·</span><span style="color:#9c9c9c">·</span><span style="color:#9c9c9c">·</span><span style="color:#9c9c9c">·</span><span style="color:#9c9c9c">·</span><span style="color:#9c9c9c">·</span></div>
<div class="t m" style="left:12px;top:1000px;color:#9a9a9a">00a0</div>
<div class="t m" style="left:80.10000000000001px;top:1000px;color:#000">00 00 00 00 00 00 00 00  00 00 00 00 00 00 00 00   <span style="color:#9c9c9c">·</span><span style="color:#9c9c9c">·</span><span style="color:#9c9c9c">·</span><span style="color:#9c9c9c">·</span><span style="color:#9c9c9c">·</span><span style="color:#9c9c9c">·</span><span style="color:#9c9c9c">·</span><span style="color:#9c9c9c">·</span> <span style="color:#9c9c9c">·</span><span style="color:#9c9c9c">·</span><span style="color:#9c9c9c">·</span><span style="color:#9c9c9c">·</span><span style="color:#9c9c9c">·</span><span style="color:#9c9c9c">·</span><span style="color:#9c9c9c">·</span><span style="color:#9c9c9c">·</span></div>
<div class="t m" style="left:12px;top:1022px;color:#9a9a9a">00b0</div>
<div class="t m" style="left:80.10000000000001px;top:1022px;color:#000">00 00 00 00 00 00 00 00  00 00 00 00 00 00 00 00   <span style="color:#9c9c9c">·</span><span style="color:#9c9c9c">·</span><span style="color:#9c9c9c">·</span><span style="color:#9c9c9c">·</span><span style="color:#9c9c9c">·</span><span style="color:#9c9c9c">·</span><span style="color:#9c9c9c">·</span><span style="color:#9c9c9c">·</span> <span style="color:#9c9c9c">·</span><span style="color:#9c9c9c">·</span><span style="color:#9c9c9c">·</span><span style="color:#9c9c9c">·</span><span style="color:#9c9c9c">·</span><span style="color:#9c9c9c">·</span><span style="color:#9c9c9c">·</span><span style="color:#9c9c9c">·</span></div>
<div class="a" style="left:433px;top:868px;width:127px;height:22px;background:#308cc6"></div>
<div class="t m" style="left:433.5px;top:868px;color:#fff">ff 03 02 81</div>
<div class="a" style="left:786.2px;top:868px;width:46.6px;height:22px;background:#308cc6"></div>
<div class="t m" style="left:786.9000000000001px;top:868px;color:#fff">····</div>
<div class="a" style="left:1905px;top:868px;width:14px;height:183px;background:#e3e3e3;border-left:1px solid #cfcfcf"></div>
<div class="a" style="left:1906px;top:868px;width:13px;height:13px;background:#fafafa;border-bottom:1px solid #d6d6d6"></div>
<svg class="a" style="left:1906px;top:868px" width="14" height="13" viewBox="0 0 14 13"><path d="M3,8 L7,4 L11,8 Z" fill="#505050"/></svg>
<div class="a" style="left:1906px;top:889px;width:13px;height:28px;background:linear-gradient(90deg,#fdfdfd,#f0f0f0);border-top:1px solid #d4d4d4;border-bottom:1px solid #d4d4d4"></div>
<div class="a" style="left:1906px;top:1037px;width:13px;height:14px;background:#fafafa;border-top:1px solid #d6d6d6"></div>
<svg class="a" style="left:1906px;top:1037px" width="14" height="14" viewBox="0 0 14 14"><path d="M3,5 L7,9 L11,5 Z" fill="#505050"/></svg>
<div class="a" style="left:953px;top:864px;width:18px;height:1px;background:repeating-linear-gradient(90deg,#b0b0b0 0 1px,transparent 1px 3px)"></div>
<div class="a" style="left:0;top:1052px;width:1920px;height:28px;background:#ededed;border-bottom:1px solid #3a3a3a"></div>
<div class="a" style="left:10px;top:1059px;width:14px;height:14px;border-radius:50%;background:radial-gradient(circle at 45% 35%,#f0a0a0,#e05050 60%,#c83a3a);border:1px solid #8a3a3a"></div>
<svg class="a" style="left:28px;top:1054px" width="24" height="24" viewBox="28 1054 24 24"><rect x="33.6" y="1058.8" width="10.8" height="13.9" fill="#f2f2ec" stroke="#d0d0c8" stroke-width="0.6"/><path d="M33.8,1059 H43.5 V1062.5 H33.8 Z" fill="#2a9ee0"/><path d="M36.5,1062.5 L37.8,1060 L38.5,1062.5 Z" fill="#fff"/><g fill="#d4d4cc"><rect x="35" y="1064" width="8" height="1.2"/><rect x="35" y="1067" width="8" height="1.2"/><rect x="35" y="1070" width="8" height="1.2"/></g><path d="M38.3,1067.8 L46.2,1059.8" stroke="#555" stroke-width="2.6" stroke-linecap="round"/><path d="M37.3,1068.8 L38.6,1067.5" stroke="#000" stroke-width="1.6" stroke-linecap="round"/></svg>
<div class="t" style="left:66.90px;top:1055px;letter-spacing:0.554px">Point-to-Point Protocol (ppp), 4 bytes</div>
<div class="a" style="left:1215px;top:1060px;width:1px;height:16px;background:repeating-linear-gradient(#b4b4b4 0 1px,transparent 1px 3px)"></div>
<div class="t" style="left:1234.80px;top:1055px;letter-spacing:0.572px">Packets: 2518 · Displayed: 2518 (100.0%)</div>
<div class="a" style="left:1753px;top:1060px;width:1px;height:16px;background:repeating-linear-gradient(#b4b4b4 0 1px,transparent 1px 3px)"></div>
<div class="t" style="left:1772.50px;top:1055px;letter-spacing:0.587px">Profile: Default</div>
</body></html>
